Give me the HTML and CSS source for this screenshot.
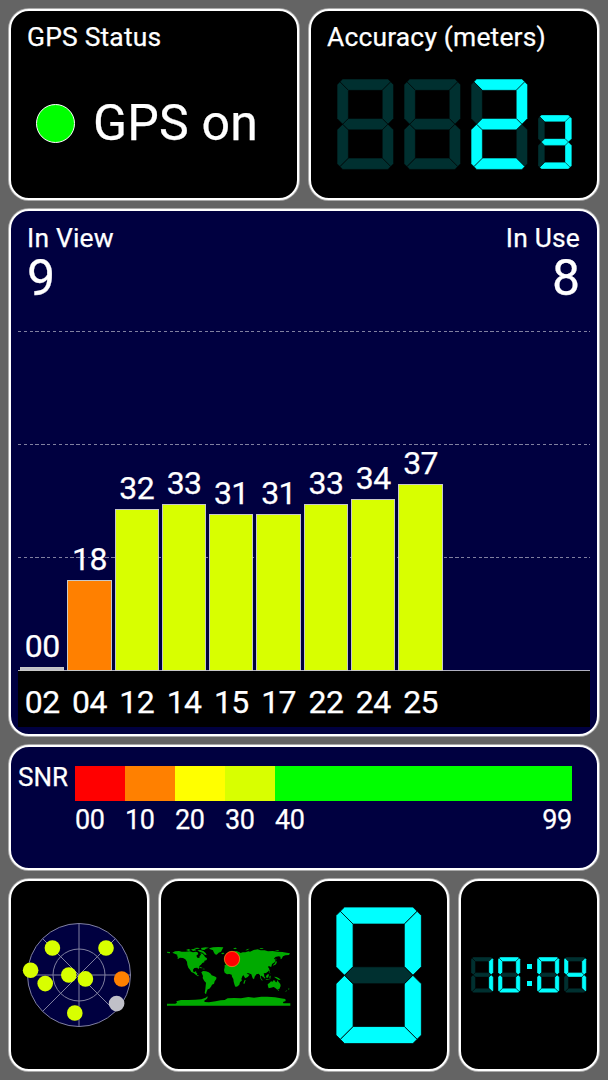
FILE: index.html
```html
<!DOCTYPE html>
<html>
<head>
    <meta charset="UTF-8">
    <title>GPS Status</title>
    <link rel="stylesheet" href="styles.css">
</head>

<body>
    <div class="dashboard">
        <div class="row two">
            <div class="card status">
                <div class="title">GPS Status</div>
                <div class="status-line">
                    <span class="led"></span>
                    <span class="status-text">GPS on</span>
                </div>
            </div>
            <div class="card accuracy">
                <div class="title">Accuracy (meters)</div>
                <div class="digits">
                    <svg class="digit" data-value=" "></svg>
                    <svg class="digit" data-value=" "></svg>
                    <svg class="digit" data-value="2"></svg>
                    <svg class="digit small" data-value="3"></svg>
                </div>
            </div>
        </div>

        <div class="card blue satellites">
            <div class="counts">
                <div>
                    <div class="title">In View</div>
                    <div class="count">9</div>
                </div>
                <div class="right">
                    <div class="title">In Use</div>
                    <div class="count">8</div>
                </div>
            </div>
            <div class="plot" id="plot"></div>
            <div class="axis" id="axis"></div>
        </div>

        <div class="card blue snr">
            <div class="snr-label">SNR</div>
            <div class="scale">
                <div class="scale-bar">
                    <span class="red"></span>
                    <span class="orange"></span>
                    <span class="yellow"></span>
                    <span class="lime"></span>
                    <span class="green"></span>
                </div>
                <div class="scale-labels">
                    <span>00</span>
                    <span>10</span>
                    <span>20</span>
                    <span>30</span>
                    <span>40</span>
                    <span class="last">99</span>
                </div>
            </div>
        </div>

        <div class="row four">
            <div class="card center">
                <svg class="radar" viewBox="-56 -52 112 104">
                    <circle class="sky" r="51.5"/>
                    <path class="lines" d="M0 -51.5V51.5M-51.5 0H51.5M-36.4 -36.4L36.4 36.4M36.4 -36.4L-36.4 36.4"/>
                    <circle class="lines" r="26"/>
                    <g class="good">
                        <circle cx="-26.6" cy="-27" r="7.8"/>
                        <circle cx="27" cy="-27" r="7.8"/>
                        <circle cx="-48.4" cy="-4.7" r="7.8"/>
                        <circle cx="-33.8" cy="8.6" r="7.8"/>
                        <circle cx="-10.2" cy="0" r="7.8"/>
                        <circle cx="6.4" cy="3.9" r="7.8"/>
                        <circle cx="-4.2" cy="38" r="7.8"/>
                    </g>
                    <circle class="weak" cx="42.7" cy="4" r="7.8"/>
                    <circle class="none" cx="37.6" cy="28.6" r="7.8"/>
                </svg>
            </div>
            <div class="card center">
                <svg class="map" viewBox="36 45 372 185">
                    <g class="land">
                        <!-- north america -->
                        <path d="M36 65l9 1v4l-8-1zM52 68l8-4 12-1 8 2 12 0 12-1 10 3 8-2 6 2 2 5-6 5 3 6 6 1 1-6 4-4-2-4 7 1 5 6 2 4 6 4-1 5-8 3 2 3-7 3-4 5-5 4-1 6-2 4-3-5-9 1-4 5 1 6 4 1 4-3 1 5 3 2-1 4 6 3-3 2-7-5-6-5-7-3-4-7-5-6-3-9-1-9-5-7-7-4-9-1-6 4-2-3 3-3-5-3 3-3z"/>
                        <path d="M93 60l8-3 6 3-6 3zM108 58l12-1 4 4-10 2zM115 54l14-1 6 3-11 1zM127 61l9-1 9 3 7 6 3 6-6-1-6-6-8-2zM138 54l14-2 10 1-9 3-5 4-8-1z"/>
                        <!-- greenland and iceland -->
                        <path d="M162 55l12-3 16-1 15 1-3 6-4 7-7 3-6 6-5-1-4-7-2-5-8-3z"/>
                        <path d="M198 69l8-1 2 3-6 2z"/>
                        <!-- caribbean -->
                        <path d="M130 110l6 1 7 3-5 1zM143 116l5 0 2 2-7 0z"/>
                        <!-- south america -->
                        <path d="M139 127l5-4 9 1 8 3 6 4 3 5 8 3 6 3 0 5-5 7-2 7-6 3-3 6-5 6-5 2-3 7-2 6 3 1-4 0-3-4 2-10 1-10 1-10-5-5-5-9 1-6z"/>
                        <!-- europe and asia -->
                        <path d="M210 98l0-7 7-2 2-6 6-3 3-7 8-8 8-2 9 4 4 2 6-2 8 0 9-3 5 1 11-5 12-2 9 3 12 0 10 3 14-1 15 2 14 1 13 2 10 2-3 5-11 1-7 3-4 7-3 2-1-8-5-1-10 2-4 5 5 3-3 8-8 5-2 8-4 0-3-3-3 4 4 6-2 6-8 6-7 1 2 6-3 6-5-5-3 1 2 8 4 5-2 1-5-7-1-9-4-5-7 2-5 7-2 8-4-3-4-12-8-3-6-1 4 4 5 1-6 7-7 4-4-6-5-9-1-4-3-3-9 1-3-6-3 3 2 4-7-6-7 0-6 4z"/>
                        <path d="M216 81l5-6 4 7-5 3zM211 80l3 0 0 3-3 1zM234 55l8-2 4 2-6 3zM271 61l7-4 6-1-8 5zM313 54l10 1 3 2-9 0zM359 61l14 0-4 3zM362 82l2 6-1 4zM362 93l4 2-3 8-9 4 1-3 5-4z"/>
                        <!-- africa -->
                        <path d="M209 105l10-3 10-1 1 4 9 3 9-1 6 2 4 11 5 5 8 0-3 7-6 7-3 8 2 4-6 6-2 7-5 5-6 2-3-5-3-11-1-8-4-7-1-6-7-2-7 1-7-5-2-7 2-9z"/>
                        <path d="M269 150l3 0-4 12-3-2z"/>
                        <!-- southeast asia and oceania -->
                        <path d="M321 132l4 3 6 8-1 3-6-6zM333 138l6-6 3 2-3 9-5 0zM331 147l12 2 3 1-11 0zM344 138l3-1-1 9-3-1zM342 118l3 4-2 4 4 5-4-3zM357 140l7 1 8 4 5 5-7-1-7-4z"/>
                        <path d="M338 163l6-5 4-4 5 1 2-4 6 1 0 4 4 1 2-7 4 6 5 6 1 6-4 9-6 2-5-4-6-4-8 2-7 2-2-6zM368 180l4 0-2 3zM402 173l1 5-4 1zM397 180l-4 5-2-1z"/>
                        <!-- antarctica -->
                        <path d="M36 221l25 0 5-3-2-4 14-4 23 0 20-1 18-1 13-5 5-4 1 3-2 4-9 7 3 3 12 1 20-3 15-3 12-1 9-5 20-1 20 1 22-4 17 2 22-3 18 0 23 2 17 3 14 2 1 6-8 3 1 4 21 0 0 7-370 0z"/>
                    </g>
                    <circle class="pin" cx="231" cy="87" r="23"/>
                </svg>
            </div>
            <div class="card center">
                <svg class="digit large" data-value="0"></svg>
            </div>
            <div class="card center">
                <div class="clock">
                    <svg class="digit" data-value="1"></svg>
                    <svg class="digit" data-value="0"></svg>
                    <span class="colon"><i></i><i></i></span>
                    <svg class="digit" data-value="0"></svg>
                    <svg class="digit" data-value="4"></svg>
                </div>
            </div>
        </div>
    </div>

    <script>
        const satellites = [
            { id: "02", snr: "00", color: "none" },
            { id: "04", snr: "18", color: "orange" },
            { id: "12", snr: "32", color: "lime" },
            { id: "14", snr: "33", color: "lime" },
            { id: "15", snr: "31", color: "lime" },
            { id: "17", snr: "31", color: "lime" },
            { id: "22", snr: "33", color: "lime" },
            { id: "24", snr: "34", color: "lime" },
            { id: "25", snr: "37", color: "lime" },
        ];

        // seven segments on a 50 x 80 grid
        const segments = {
            a: "2.5,2.5 5,0 45,0 47.5,2.5 40,10 10,10",
            b: "47.5,2.5 50,5 50,35 45,40 40,35 40,10",
            c: "45,40 50,45 50,75 47.5,77.5 40,70 40,45",
            d: "2.5,77.5 10,70 40,70 47.5,77.5 45,80 5,80",
            e: "5,40 10,45 10,70 2.5,77.5 0,75 0,45",
            f: "2.5,2.5 10,10 10,35 5,40 0,35 0,5",
            g: "5,40 10,35 40,35 45,40 40,45 10,45",
        };

        const lit = {
            " ": "",
            "0": "abcdef",
            "1": "bc",
            "2": "abged",
            "3": "abgcd",
            "4": "fgbc",
        };

        function drawDigits() {
            document.querySelectorAll(".digit").forEach((svg) => {
                const on = lit[svg.dataset.value];
                svg.setAttribute("viewBox", "0 0 50 80");
                svg.innerHTML = Object.keys(segments).map((key) =>
                    `<polygon class="${on.includes(key) ? "on" : "off"}" points="${segments[key]}"/>`
                ).join("");
            });
        }

        function drawBars() {
            const plot = document.getElementById("plot");
            const axis = document.getElementById("axis");

            satellites.forEach((s) => {
                const height = Math.max(4, Number(s.snr) * 5.06);
                plot.innerHTML += `
                    <div class="column">
                        <span class="value">${s.snr}</span>
                        <div class="bar ${s.color}" style="height: ${height}px"></div>
                    </div>
                `;
                axis.innerHTML += `<span>${s.id}</span>`;
            });
        }

        drawDigits();
        drawBars();
    </script>
</body>

</html>
```

FILE: styles.css
```css
* {
    box-sizing: border-box;
}

body {
    margin: 0;
    background: #646464;
    color: white;
    font-family: Roboto, sans-serif;
    font-size: 26px;
    -webkit-text-stroke: 0.25px white;
}

svg {
    display: block;
    overflow: visible;
}

.dashboard {
    display: grid;
    grid-template-rows: 191px 527px 125px 192px;
    gap: 9px;
    height: 1080px;
    padding: 9px;
}

.row {
    display: grid;
    gap: 10px;
}

.two {
    grid-template-columns: 1fr 1fr;
}

.four {
    grid-template-columns: repeat(4, 1fr);
}

.card {
    border: 2px solid white;
    border-radius: 20px;
    background: black;
    box-shadow: 0 0 0 1px rgba(255, 255, 255, 0.45);
}

.blue {
    background: #000040;
}

.center {
    display: flex;
    align-items: center;
    justify-content: center;
}

.title {
    font-size: 26.4px;
    letter-spacing: 0.2px;
    line-height: 30px;
}

/* top row */
.status,
.accuracy {
    padding: 11px 16px;
}

.status-line {
    display: flex;
    align-items: center;
    gap: 18px;
    margin-top: 41px;
    padding-left: 9px;
}

.led {
    width: 39px;
    height: 39px;
    border: 1px solid white;
    border-radius: 50%;
    background: #00ff00;
}

.status-text {
    font-size: 50px;
    line-height: 60px;
    letter-spacing: 0.2px;
}

.digits {
    display: flex;
    align-items: flex-end;
    gap: 10.4px;
    margin-top: 27px;
    padding-left: 10px;
}

.digit {
    width: 56.6px;
    height: 90.4px;
}

.digit.small {
    width: 33.8px;
    height: 54px;
}

.digit.large {
    width: 85.4px;
    height: 136.6px;
}

.digit polygon {
    stroke: black;
    stroke-width: 0.45px;
}

.on {
    fill: #00ffff;
}

.off {
    fill: #003030;
}

/* satellites */
.satellites {
    display: flex;
    flex-direction: column;
    padding: 0 7px 7px;
}

.counts {
    display: flex;
    justify-content: space-between;
    height: 120px;
    padding: 12px 10px 0 9px;
}

.count {
    font-size: 50px;
    line-height: 50px;
}

.right {
    text-align: right;
}

.plot {
    display: flex;
    align-items: flex-end;
    gap: 3px;
    height: 340px;
    padding-left: 2px;
    background-image:
        linear-gradient(#b0b0c0, #b0b0c0),
        repeating-linear-gradient(90deg, #8080a0 0 3.3px, transparent 3.3px 5.83px),
        repeating-linear-gradient(90deg, #8080a0 0 3.3px, transparent 3.3px 5.83px),
        repeating-linear-gradient(90deg, #8080a0 0 3.3px, transparent 3.3px 5.83px);
    background-size: 100% 1px;
    background-position: 0 339px, 0 0, 0 113px, 0 226px;
    background-repeat: no-repeat;
}

.column {
    width: 44.3px;
    text-align: center;
}

.value,
.axis span {
    display: block;
    font-size: 32px;
    letter-spacing: -0.6px;
    line-height: 32px;
}

.value {
    margin-bottom: 5px;
}

.bar {
    border: 1px solid #c8c8c8;
}

.axis {
    display: flex;
    gap: 3px;
    height: 56px;
    padding: 15px 0 0 2px;
    background: black;
}

.axis span {
    width: 44.3px;
    text-align: center;
}

.red {
    background: #ff0000;
}

.orange {
    background: #ff8000;
}

.yellow {
    background: #ffff00;
}

.lime {
    background: #d8ff00;
}

.green {
    background: #00ff00;
}

.none {
    background: #c0c0c8;
    fill: #c0c0c8;
}

/* snr scale */
.snr {
    display: flex;
    padding: 19px 0 0 7px;
}

.snr-label {
    width: 57px;
    line-height: 22px;
}

.scale {
    width: 497px;
}

.scale-bar,
.scale-labels {
    display: grid;
    grid-template-columns: repeat(4, 50px) 1fr;
}

.scale-bar {
    height: 35px;
}

.scale-labels {
    grid-template-columns: repeat(5, 50px) 1fr;
    margin-top: 4px;
    font-size: 27px;
    letter-spacing: -0.3px;
    line-height: 30px;
}

.last {
    text-align: right;
}

/* bottom row */
.radar {
    width: 112px;
    height: 104px;
}

.sky {
    fill: #000040;
    stroke: #8080a0;
}

.lines {
    fill: none;
    stroke: #8080a0;
}

.good {
    fill: #d8ff00;
}

.weak {
    fill: #ff8000;
}

.map {
    width: 124px;
    height: 61.7px;
    margin-top: 2px;
}

.land {
    fill: #00aa00;
}

.pin {
    fill: #ff0000;
    stroke: #ffa020;
    stroke-width: 2px;
}

.clock {
    display: flex;
    gap: 4.7px;
}

.clock .digit {
    width: 22.3px;
    height: 35.7px;
}

.clock .digit polygon {
    stroke-width: 0.9px;
}

.colon {
    display: flex;
    flex-direction: column;
    justify-content: space-between;
    width: 7.6px;
    padding: 6.5px 0 7px 1.5px;
}

.colon i {
    width: 5px;
    height: 5px;
    background: #00ffff;
}
```
